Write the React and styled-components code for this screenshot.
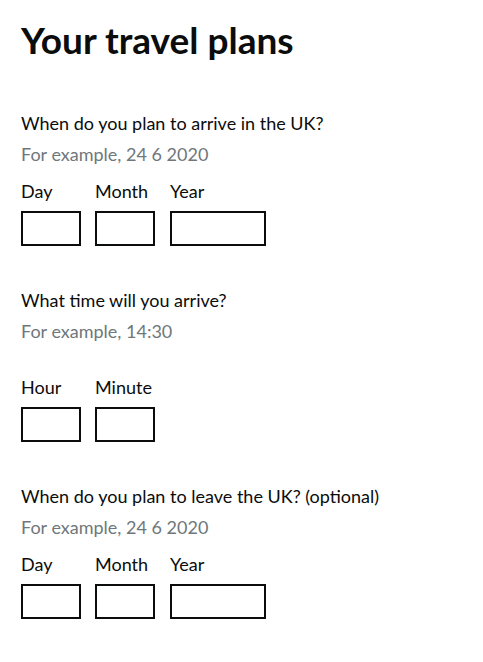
import React from 'react';
import styled, { createGlobalStyle } from 'styled-components';

const GlobalStyle = createGlobalStyle`
  body {
    margin: 0;
    background: #ffffff;
    font-family: Lato, "Noto Sans", sans-serif;
    color: #0b0c0c;
  }
`;

const Page = styled.main`
  padding: 20px 0 0 21px;
`;

const Title = styled.h1`
  margin: 0 0 51px;
  font-size: 37px;
  line-height: 40px;
  font-weight: 700;
`;

const Fieldset = styled.fieldset`
  margin: 0 0 42px;
  padding: 0;
  border: 0;
`;

const Legend = styled.legend`
  padding: 0;
  font-size: 18px;
  line-height: 25px;
  margin-bottom: 6px;
`;

const Hint = styled.div`
  font-size: 18px;
  line-height: 25px;
  color: #6f777b;
  margin-bottom: ${(props) => props.$gap}px;
`;

const Inputs = styled.div`
  display: flex;
  gap: 14px;
`;

const Item = styled.div`
  display: flex;
  flex-direction: column;
  margin-left: ${(props) => (props.$wide ? 1 : 0)}px;
`;

const Label = styled.label`
  font-size: 18px;
  line-height: 25px;
  margin-bottom: 7px;
`;

const Input = styled.input`
  box-sizing: border-box;
  width: ${(props) => (props.$wide ? 96 : 60)}px;
  height: 35px;
  margin: 0;
  padding: 4px;
  border: 2px solid #0b0c0c;
  border-radius: 0;
  font: inherit;
`;

const DateField = ({ question, hint, gap, parts }) => (
  <Fieldset>
    <Legend>{question}</Legend>
    <Hint $gap={gap}>{hint}</Hint>
    <Inputs>
      {parts.map((p) => (
        <Item key={p} $wide={p === 'Year'}>
          <Label>{p}</Label>
          <Input $wide={p === 'Year'} />
        </Item>
      ))}
    </Inputs>
  </Fieldset>
);

export default function App() {
  return (
    <Page>
      <GlobalStyle />
      <Title>Your travel plans</Title>
      <DateField
        question="When do you plan to arrive in the UK?"
        hint="For example, 24 6 2020"
        gap={12}
        parts={['Day', 'Month', 'Year']}
      />
      <DateField
        question="What time will you arrive?"
        hint="For example, 14:30"
        gap={31}
        parts={['Hour', 'Minute']}
      />
      <DateField
        question="When do you plan to leave the UK? (optional)"
        hint="For example, 24 6 2020"
        gap={12}
        parts={['Day', 'Month', 'Year']}
      />
    </Page>
  );
}
